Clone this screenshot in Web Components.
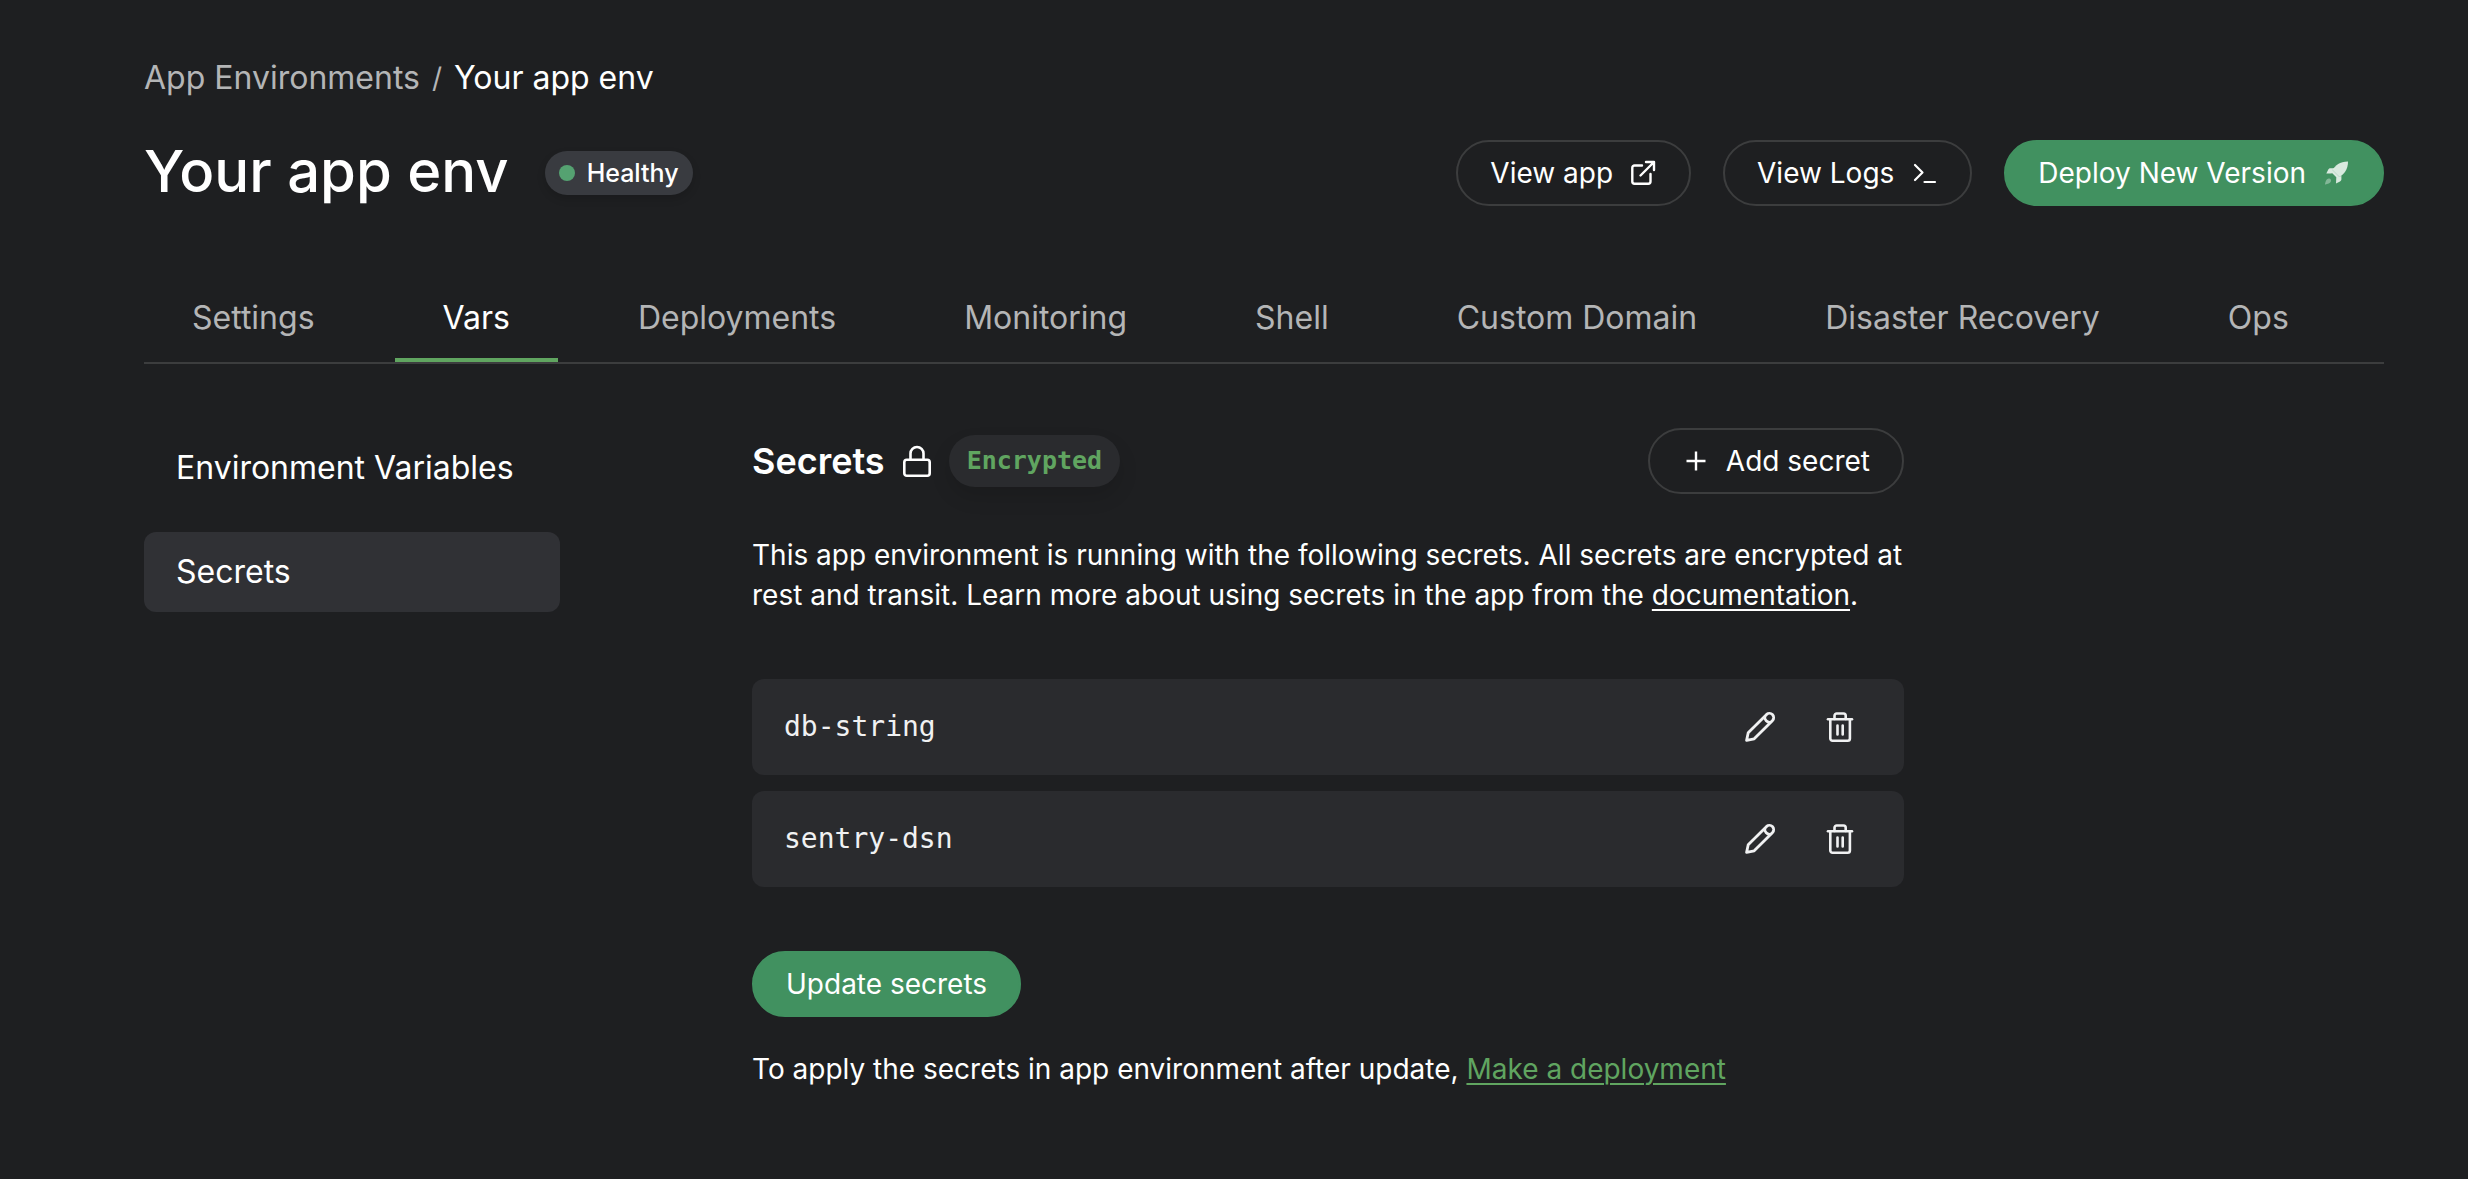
<!DOCTYPE html>
<html lang="en">
<head>
<meta charset="utf-8">
<meta name="viewport" content="width=device-width, initial-scale=1">
<title>Your app env</title>
<style>
  :root {
    --bg: #1e1f21;
    --row: #2a2b2e;
    --selected: #303135;
    --pill: #393b40;
    --line: #3c3d3e;
    --muted: #b4b5b6;
    --text: #ffffff;
    --green: #419160;
    --accent: #60a560;
    --mono: "DejaVu Sans Mono", monospace;
  }
  body {
    margin: 0;
    background: var(--bg);
    color: var(--text);
    font: 400 28px/40px Inter, sans-serif;
    overflow-x: hidden;
  }
</style>
</head>
<body>
<app-env-page></app-env-page>

<script>
const define = (name, html, setup) => {
  const template = document.createElement('template');
  template.innerHTML = html;
  customElements.define(name, class extends HTMLElement {
    constructor() {
      super();
      this.attachShadow({ mode: 'open' }).append(template.content.cloneNode(true));
    }
    connectedCallback() { if (setup) setup(this, this.shadowRoot); }
  });
};

const ICONS = {
  external: '<g fill="none" stroke="currentColor" stroke-width="2.4" stroke-linecap="round" stroke-linejoin="round"><path d="M13 6.500H5.500A2.200 2.200 0 0 0 3.300 8.700V22.500A2.200 2.200 0 0 0 5.500 24.700H19.300A2.200 2.200 0 0 0 21.500 22.500V15"/><path d="M11.500 16.500 25 3M17 3H25V11"/></g>',
  terminal: '<g fill="none" stroke="currentColor" stroke-width="2.200" stroke-linecap="round" stroke-linejoin="round"><path d="M5 6 12.500 13.500 5 21"/><path d="M14.500 23H25"/></g>',
  rocket: '<g fill="currentColor"><path opacity=".8" d="M26 2.600C17.500 2.600 13.500 6.500 10.500 11L17.500 18C22 15 26 11 26 2.600Z"/><path opacity=".8" d="M12.500 9.200H8.600C7.500 9.200 6.800 9.700 6.300 10.500L4.300 14.500H8.500L10.300 14.200 14.300 18.200 14 24.500 18 22.400C18.800 22 19.400 21.200 19.400 20.200V16.500L17.500 18 10.500 11Z"/><path opacity=".35" d="M5 20.300C3.400 21.900 3 25.500 3 25.500S6.600 25.100 8.200 23.500C10.500 21 7.500 18 5 20.300Z"/></g>',
  plus: '<path d="M14 4.500V23.500M4.500 14H23.500" fill="none" stroke="currentColor" stroke-width="2.400"/>',
  lock: '<g fill="none" stroke="currentColor" stroke-width="2.600"><rect x="3.300" y="14.700" width="25.400" height="16" rx="2.500"/><path d="M9.500 14.500V8.500A6.500 6.500 0 0 1 22.500 8.500V14.500"/></g>',
  pencil: '<g fill="none" stroke="currentColor" stroke-width="2.800" stroke-linejoin="round"><path d="M2.600 29.400 4.200 21.800 22.600 3.400A4.250 4.250 0 0 1 28.600 9.400L10.200 27.800Z"/><path d="M20.800 5.400A5 5 0 0 0 26.600 11.200"/></g>',
  trash: '<g fill="none" stroke="currentColor" stroke-width="2.600" stroke-linecap="round" stroke-linejoin="round"><path d="M4 8.200H28"/><path d="M6.300 8.200V27.500A2.200 2.200 0 0 0 8.500 29.700H23.700A2.200 2.200 0 0 0 25.900 27.500V8.200"/><path d="M10.500 8V4.700A2.200 2.200 0 0 1 12.700 2.500H19.500A2.200 2.200 0 0 1 21.700 4.700V8"/><path d="M13.500 14.500V23.500M18.700 14.500V23.500"/></g>'
};
const SIZES = { lock: 32, pencil: 32, trash: 32 };

define('ui-icon', `
  <style>
    :host { display: inline-flex; flex: none; }
    svg { display: block; }
  </style>
  <svg aria-hidden="true"></svg>`, (host, root) => {
    const name = host.getAttribute('name');
    const size = SIZES[name] || 28;
    const svg = root.querySelector('svg');
    svg.setAttribute('viewBox', `0 0 ${size} ${size}`);
    svg.setAttribute('width', size);
    svg.setAttribute('height', size);
    svg.innerHTML = ICONS[name] || '';
  });

define('ui-button', `
  <style>
    :host { display: inline-flex; flex: none; }
    button {
      display: flex; align-items: center; gap: 16px;
      margin: 0; padding: 11px 32px;
      border: 2px solid var(--line); border-radius: 999px;
      background: none; color: inherit; font: inherit; cursor: pointer;
    }
    :host([primary]) button { background: var(--green); border-color: var(--green); }
  </style>
  <button type="button"><slot></slot></button>`);

define('icon-button', `
  <style>
    :host { display: inline-flex; flex: none; }
    button {
      display: flex; padding: 16px; border: 0; margin: 0;
      background: none; color: #f0f1f2; cursor: pointer;
    }
  </style>
  <button type="button"></button>`, (host, root) => {
    const button = root.querySelector('button');
    button.setAttribute('aria-label', host.getAttribute('label'));
    const icon = document.createElement('ui-icon');
    icon.setAttribute('name', host.getAttribute('icon'));
    button.replaceChildren(icon);
  });

define('status-badge', `
  <style>
    :host {
      display: inline-flex; align-items: center; gap: 12px;
      padding: 2px 14px; border-radius: 22px;
      background: var(--pill); font-size: 25px; font-weight: 500;
      box-shadow: 0 4px 8px rgb(0 0 0 / .14);
    }
    i { width: 16px; height: 16px; border-radius: 50%; background: #55a271; }
  </style>
  <i></i><slot></slot>`);

define('mono-badge', `
  <style>
    :host {
      display: inline-flex; padding: 6px 18px; border-radius: 26px;
      background: var(--row); color: var(--accent);
      font: 700 25px/40px var(--mono);
      box-shadow: 0 10px 20px rgb(0 0 0 / .12);
    }
  </style>
  <slot></slot>`);

define('crumb-trail', `
  <style>
    :host { display: block; font-size: 32px; line-height: 48px; }
    nav { display: flex; gap: 12px; color: var(--muted); }
    a { color: inherit; text-decoration: none; }
    a[aria-current] { color: var(--text); }
    span { font-size: 28px; }
  </style>
  <nav aria-label="Breadcrumb">
    <a href="#environments">App Environments</a><span>/</span><a href="#env" aria-current="page">Your app env</a>
  </nav>`);

define('env-header', `
  <style>
    :host { display: flex; align-items: center; justify-content: space-between; gap: 32px; }
    .name, .actions { display: flex; align-items: center; }
    .name { gap: 36px; }
    .actions { gap: 32px; }
    h1 { margin: 0; padding-bottom: 4px; font-size: 58px; line-height: 68px; font-weight: 500; }
  </style>
  <div class="name"><h1>Your app env</h1><status-badge>Healthy</status-badge></div>
  <div class="actions">
    <ui-button>View app<ui-icon name="external"></ui-icon></ui-button>
    <ui-button>View Logs<ui-icon name="terminal"></ui-icon></ui-button>
    <ui-button primary>Deploy New Version<ui-icon name="rocket"></ui-icon></ui-button>
  </div>`);

define('tab-bar', `
  <style>
    :host { display: block; border-bottom: 2px solid var(--line); }
    nav { display: flex; gap: 32px; }
    ::slotted(a) {
      padding: 22px 48px 16px; border-bottom: 4px solid transparent;
      color: var(--muted); text-decoration: none; white-space: nowrap;
      font-size: 32px; line-height: 48px;
    }
    ::slotted(a[aria-current]) { color: var(--text); border-color: var(--accent); }
  </style>
  <nav aria-label="Sections"><slot></slot></nav>`);

define('side-menu', `
  <style>
    :host { display: block; flex: none; width: 416px; }
    nav { display: flex; flex-direction: column; gap: 24px; }
    ::slotted(a) {
      padding: 16px 32px; border-radius: 12px;
      color: var(--text); text-decoration: none;
      font-size: 32px; line-height: 48px;
    }
    ::slotted(a[aria-current]) { background: var(--selected); }
  </style>
  <nav aria-label="Variables"><slot></slot></nav>`);

define('secret-row', `
  <style>
    :host {
      display: flex; align-items: center; gap: 16px;
      padding: 16px 32px; border-radius: 12px; background: var(--row);
    }
    span { flex: 1; font-family: var(--mono); color: #f0f1f2; }
  </style>
  <span><slot></slot></span>
  <icon-button icon="pencil" label="Edit"></icon-button>
  <icon-button icon="trash" label="Delete"></icon-button>`);

define('secrets-panel', `
  <style>
    :host { display: flex; flex-direction: column; flex: 0 1 1152px; min-width: 0; }
    header { display: flex; align-items: center; justify-content: space-between; margin-bottom: 41px; }
    .title { display: flex; align-items: center; gap: 16px; }
    h2 { margin: 0; font-size: 36px; line-height: 48px; font-weight: 600; }
    p { margin: 0; }
    a { color: inherit; text-decoration: underline 2px; text-underline-offset: 4px; }
    .deploy { color: var(--accent); }
    .list { display: flex; flex-direction: column; gap: 16px; margin: 64px 0; }
    .update { align-self: flex-start; margin-bottom: 32px; }
  </style>
  <header>
    <div class="title"><h2>Secrets</h2><ui-icon name="lock"></ui-icon><mono-badge>Encrypted</mono-badge></div>
    <ui-button><ui-icon name="plus"></ui-icon>Add secret</ui-button>
  </header>
  <p>This app environment is running with the following secrets. All secrets are encrypted at rest and transit. Learn more about using secrets in the app from the <a href="#docs">documentation</a>.</p>
  <div class="list"><secret-row>db-string</secret-row><secret-row>sentry-dsn</secret-row></div>
  <ui-button class="update" primary>Update secrets</ui-button>
  <p>To apply the secrets in app environment after update, <a class="deploy" href="#deploy">Make a deployment</a></p>`);

define('app-env-page', `
  <style>
    :host { display: block; padding: 54px 84px 64px 144px; }
    env-header { margin-top: 35px; }
    tab-bar { margin-top: 63px; }
    .content { display: flex; gap: 192px; margin-top: 64px; }
  </style>
  <crumb-trail></crumb-trail>
  <env-header></env-header>
  <tab-bar>
    <a href="#settings">Settings</a>
    <a href="#vars" aria-current="page">Vars</a>
    <a href="#deployments">Deployments</a>
    <a href="#monitoring">Monitoring</a>
    <a href="#shell">Shell</a>
    <a href="#domain">Custom Domain</a>
    <a href="#recovery">Disaster Recovery</a>
    <a href="#ops">Ops</a>
  </tab-bar>
  <div class="content">
    <side-menu>
      <a href="#variables">Environment Variables</a>
      <a href="#secrets" aria-current="page">Secrets</a>
    </side-menu>
    <secrets-panel></secrets-panel>
  </div>`);
</script>
</body>
</html>
